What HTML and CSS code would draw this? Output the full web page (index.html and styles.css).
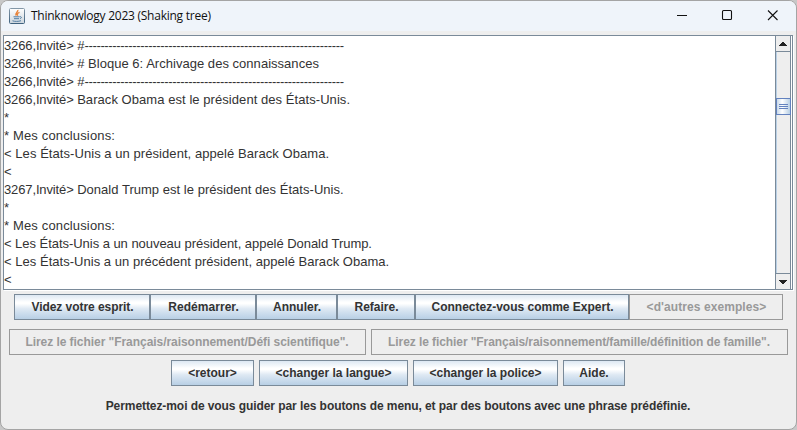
FILE: index.html
```
<!DOCTYPE html>
<html lang="fr">
<head>
<meta charset="utf-8">
<title>Thinknowlogy 2023 (Shaking tree)</title>
<link rel="stylesheet" href="styles.css">
</head>
<body>
<div class="window">
  <header class="titlebar">
    <svg class="app-icon" width="16" height="16" viewBox="0 0 16 16">
      <defs><linearGradient id="tile" x2="0" y2="1"><stop offset="0" stop-color="#8397a8"/><stop offset="1" stop-color="#3e617e"/></linearGradient>
      <linearGradient id="face" x2="0" y2="1"><stop offset="0" stop-color="#fff"/><stop offset="1" stop-color="#cbd5dd"/></linearGradient></defs>
      <rect x=".5" y=".5" width="15" height="15" rx="1" fill="url(#face)" stroke="url(#tile)"/>
      <path d="M8.800 2C9.500 4 5.600 4.800 7.200 7.600M10.500 4.300C8 5.300 8 6.200 8.700 7.700" fill="none" stroke="#e8833a" stroke-width="1.4"/>
      <path d="M4.500 8.800h6M5 10.700h5M3.500 12.800c2 .8 6 .8 8.500-.1M10.700 8.700c2.400-.4 2 1.700.2 2" fill="none" stroke="#527da3"/>
    </svg>
    <h1 class="title">Thinknowlogy 2023 (Shaking tree)</h1>
    <svg class="controls" width="110" height="16" viewBox="0 0 110 16" fill="none" stroke="#111" stroke-width="1.1">
      <path d="M3 7.500h10"/><rect x="48.500" y="2.500" width="9" height="9" rx="1"/><path d="M94 2.500l9.500 9.500M103.500 2.500l-9.500 9.500"/>
    </svg>
  </header>
  <main class="content">
    <section class="scroll-pane">
      <div class="console">
        <p><span class="prompt">3266,Invité&gt; </span>#<span class="rule">-----------------------------------------------------------------</span></p>
        <p class="snug"><span class="prompt">3266,Invité&gt; </span># Bloque 6: Archivage des connaissances</p>
        <p><span class="prompt">3266,Invité&gt; </span>#<span class="rule">-----------------------------------------------------------------</span></p>
        <p><span class="prompt">3266,Invité&gt; </span>Barack Obama est le président des États-Unis.</p>
        <p>*</p>
        <p class="loose">* Mes conclusions:</p>
        <p>&lt; Les États-Unis a un président, appelé Barack Obama.</p>
        <p>&lt;</p>
        <p class="snug"><span class="prompt">3267,Invité&gt; </span>Donald Trump est le président des États-Unis.</p>
        <p>*</p>
        <p class="loose">* Mes conclusions:</p>
        <p class="tight">&lt; Les États-Unis a un nouveau président, appelé Donald Trump.</p>
        <p class="snug">&lt; Les États-Unis a un précédent président, appelé Barack Obama.</p>
        <p>&lt;</p>
      </div>
      <div class="scrollbar">
        <div class="arrow arrow-up"><svg width="8" height="4" shape-rendering="crispEdges"><path d="M3 0h2v1h1v1h1v1h1v1H0V3h1V2h1V1h1z" fill="#222"/></svg></div>
        <div class="track"><div class="thumb"><i></i><i></i><i></i></div></div>
        <div class="arrow arrow-down"><svg width="8" height="4" shape-rendering="crispEdges"><path d="M0 0h8v1H7v1H6v1H5v1H3V3H2V2H1V1H0z" fill="#222"/></svg></div>
      </div>
    </section>
    <div class="row joined">
      <button class="w136">Videz votre esprit.</button><button class="w106">Redémarrer.</button><button class="w81">Annuler.</button><button class="w78">Refaire.</button><button class="w214">Connectez-vous comme Expert.</button><button class="w154" disabled>&lt;d'autres exemples&gt;</button>
    </div>
    <div class="row files">
      <button class="w357" disabled>Lirez le fichier "Français/raisonnement/Défi scientifique".</button>
      <button class="w417" disabled>Lirez le fichier "Français/raisonnement/famille/définition de famille".</button>
    </div>
    <div class="row menu">
      <button class="w83">&lt;retour&gt;</button>
      <button class="w149">&lt;changer la langue&gt;</button>
      <button class="w145">&lt;changer la police&gt;</button>
      <button class="w62">Aide.</button>
    </div>
    <p class="hint">Permettez-moi de vous guider par les boutons de menu, et par des boutons avec une phrase prédéfinie.</p>
  </main>
</div>
</body>
</html>
```
FILE: styles.css
```
* { box-sizing: border-box; }
body { margin: 0; background: #c8c8c8; font-family: "Liberation Sans", Arial, sans-serif; color: #333; }
p, h1 { margin: 0; }
.window { width: 797px; height: 430px; border: 1px solid #a4a4a4; border-radius: 8px; background: #eee; overflow: hidden; }
.titlebar { height: 30px; display: flex; align-items: center; padding: 0 12px 0 8px; background: #eff4fa; }
.app-icon { flex: none; }
.title { flex: 1; margin-left: 6px; font: 400 12px/16px "Open Sans", "Noto Sans", sans-serif; letter-spacing: -0.25px; color: #111; white-space: nowrap; }
.content { padding: 4px 3px 0 2px; }
.scroll-pane { display: flex; height: 255px; border: 1px solid #7a8a99; box-shadow: 1px 1px #fff; background: #fff; }
.console { flex: 1; padding-top: 1px; overflow: hidden; font-size: 13px; line-height: 18px; letter-spacing: 0.06px; }
.console p { white-space: pre; }
.console .tight { letter-spacing: -0.04px; }
.console .snug { letter-spacing: 0.03px; }
.console .loose { letter-spacing: 0.15px; }
.console .prompt { letter-spacing: -0.13px; }
.rule { letter-spacing: -0.34px; }
.scrollbar { width: 17px; display: flex; flex-direction: column; border-left: 1px solid #7a8a99; background: #eee; box-shadow: inset -1px 0 #fff; }
.arrow { width: 15px; height: 16px; flex: none; display: flex; align-items: center; justify-content: center; border: 1px solid #7a8a99; border-width: 0 1px 1px 0; }
.arrow-down { border-width: 1px 1px 0 0; }
.track { width: 15px; flex: 1; padding-top: 46px; border-left: 1px solid #b8cfe5; border-right: 1px solid #7a8a99; }
.thumb { height: 17px; margin: 0 -1px; border: 1px solid #6382bf; background: linear-gradient(90deg, #c8d9ea, #fff 40%, #b8cfe5); display: flex; flex-direction: column; align-items: center; justify-content: center; gap: 1px; }
.thumb i { width: 9px; height: 1px; background: #6382bf; }
.row { display: flex; justify-content: center; gap: 5px; }
.joined { gap: 0; margin-top: 4px; }
.joined button { padding-left: 2px; }
.files { margin-top: 9px; }
.menu { margin-top: 5px; }
button { height: 26px; padding: 0; flex: none; border: 1px solid #7a8a99; background: linear-gradient(#dde8f3, #fff 30%, #fff 36%, #dde8f3 58%, #b8cfe5); color: #333; font: 700 12px/24px "Liberation Sans", Arial, sans-serif; white-space: nowrap; }
button:disabled { color: #999; border-color: #999; background: #eee; }
.w62 { width: 62px; }
.w78 { width: 78px; }
.w81 { width: 81px; }
.w83 { width: 83px; }
.w106 { width: 106px; letter-spacing: 0.05px; }
.w136 { width: 136px; letter-spacing: -0.05px; }
.w145 { width: 145px; }
.w149 { width: 149px; }
.w154 { width: 154px; letter-spacing: 0.08px; }
.w214 { width: 214px; }
.w357 { width: 357px; letter-spacing: -0.05px; }
.w417 { width: 417px; letter-spacing: -0.08px; }
.hint { margin-top: 12px; text-align: center; font-size: 12px; font-weight: 700; line-height: 16px; letter-spacing: -0.075px; }
```
